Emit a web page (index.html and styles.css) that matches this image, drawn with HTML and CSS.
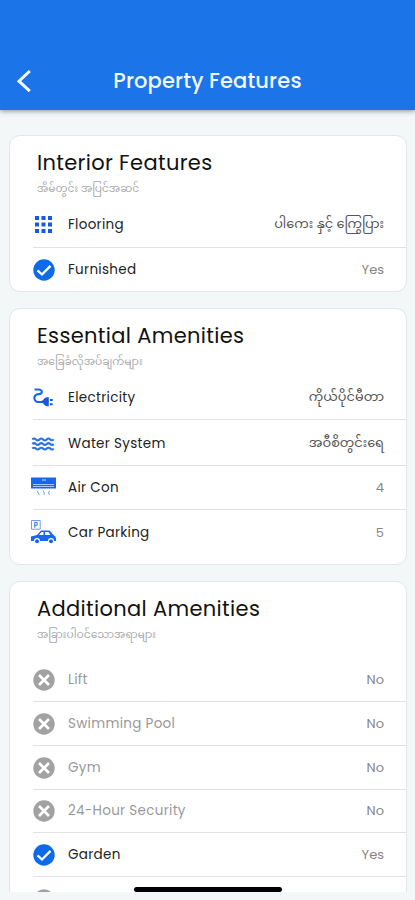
FILE: index.html
```html
<!DOCTYPE html>
<html lang="en">
<head>
<meta charset="utf-8">
<title>Property Features</title>
<link rel="stylesheet" href="styles.css">
</head>
<body>
<svg class="defs" aria-hidden="true">
  <symbol id="check" viewBox="0 0 22 22"><circle cx="11" cy="11" r="10.7" fill="#0d6ae8"/><path d="M4.5 11.3 9 15.5 17.5 6.9" fill="none" stroke="#fff" stroke-width="2.3"/></symbol>
  <symbol id="cross" viewBox="0 0 22 22"><circle cx="11" cy="11" r="10.7" fill="#a2a2a2"/><path d="M6 6l10 10M16 6L6 16" fill="none" stroke="#fff" stroke-width="2.7"/></symbol>
</svg>
<div class="screen">
  <header class="header">
    <svg class="back" viewBox="0 0 16 24"><path d="M13.8 2 3 12.200l10.800 10" fill="none" stroke="#f4f8ff" stroke-width="3"/></svg>
    <h1 class="title">Property Features</h1>
  </header>
  <main class="content">
    <section class="card interior">
      <h2 class="heading">Interior Features</h2>
      <p class="sub">အိမ်တွင်း အပြင်အဆင်</p>
      <ul class="list">
        <li class="row"><svg class="icon" viewBox="0 0 26 26"><path d="M5 4h4v4H5zM11.500 4h4v4h-4zM18 4h4v4h-4zM5 10.500h4v4H5zM11.500 10.500h4v4h-4zM18 10.500h4v4h-4zM5 17h4v4H5zM11.500 17h4v4h-4zM18 17h4v4h-4z" fill="#1858e8"/></svg><span class="label">Flooring</span><span class="value my">ပါကေး နှင့် ကြွေပြား</span></li>
        <li class="row"><svg class="icon round"><use href="#check"/></svg><span class="label">Furnished</span><span class="value">Yes</span></li>
      </ul>
    </section>
    <section class="card essential">
      <h2 class="heading">Essential Amenities</h2>
      <p class="sub">အခြေခံလိုအပ်ချက်များ</p>
      <ul class="list">
        <li class="row"><svg class="icon" viewBox="0 0 26 26"><path d="M4.500 4.500h4c4.500 0 4.500 4.600 0 4.600C3 9.100 3 17 8.500 17H12" fill="none" stroke="#1966e8" stroke-width="2.100"/><path d="M11.500 15.500h1.500c.8-2 2.500-3.200 4.500-3.200h1.300v9H17.500c-2 0-3.700-1.200-4.500-3.200h-1.500zM19.900 14h2.800v2.100h-2.800zM19.900 18.200h2.800v2.100h-2.800z" fill="#1557df"/></svg><span class="label">Electricity</span><span class="value my">ကိုယ်ပိုင်မီတာ</span></li>
        <li class="row"><svg class="icon" viewBox="0 0 26 26"><path d="M2.300 8.400q1.800-1.800 3.600 0t3.600 0 3.600 0 3.600 0 3.600 0 3.400 0M2.300 13q1.800-1.800 3.600 0t3.600 0 3.600 0 3.600 0 3.600 0 3.400 0M2.300 17.600q1.800-1.800 3.600 0t3.600 0 3.600 0 3.600 0 3.600 0 3.400 0" fill="none" stroke="#2872e6" stroke-width="2.100"/></svg><span class="label">Water System</span><span class="value my">အဝီစိတွင်းရေ</span></li>
        <li class="row"><svg class="icon" viewBox="0 0 26 26"><path d="M1 2.500h26v11H1z" fill="#1766ed"/><path d="M3 9.500h21M3 11.500h21" stroke="#a6c8ff"/><path d="M12 5h4" stroke="#d5e4ff"/><path d="M7.500 15.800q0 2 2 4M13 15.800q2 2 1 4M19.500 15.800q-2 2 0 4" fill="none" stroke="#6b9bea"/></svg><span class="label">Air Con</span><span class="value">4</span></li>
        <li class="row"><svg class="icon" viewBox="0 0 26 26"><path d="M1.500.5h8.700v8.700H1.500z" fill="none" stroke="#6d9df1"/><path d="M4.700 7.700V2.500h2.500v2.800H4.700" fill="none" stroke="#3478e8"/><path fill-rule="evenodd" d="M1 16.500 7 15l4-4.500h8.500l4 4.500q3 .8 2.500 6h-2a3 3 0 0 0-6 0H10a3 3 0 0 0-6 0H1zM9 15h4.500v-3H11.500zM15 15h5.500L18.500 12H15z" fill="#1768eb"/><circle cx="7" cy="21.200" r="2" fill="#1768eb"/><circle cx="21" cy="21.200" r="2" fill="#1768eb"/></svg><span class="label">Car Parking</span><span class="value">5</span></li>
      </ul>
    </section>
    <section class="card additional">
      <h2 class="heading">Additional Amenities</h2>
      <p class="sub">အခြားပါဝင်သောအရာများ</p>
      <ul class="list">
        <li class="row off"><svg class="icon round"><use href="#cross"/></svg><span class="label">Lift</span><span class="value">No</span></li>
        <li class="row off"><svg class="icon round"><use href="#cross"/></svg><span class="label">Swimming Pool</span><span class="value">No</span></li>
        <li class="row off"><svg class="icon round"><use href="#cross"/></svg><span class="label">Gym</span><span class="value">No</span></li>
        <li class="row off"><svg class="icon round"><use href="#cross"/></svg><span class="label">24-Hour Security</span><span class="value">No</span></li>
        <li class="row"><svg class="icon round"><use href="#check"/></svg><span class="label">Garden</span><span class="value">Yes</span></li>
        <li class="row off"><svg class="icon round"><use href="#cross"/></svg></li>
      </ul>
    </section>
  </main>
  <div class="home"></div>
</div>
</body>
</html>
```
FILE: styles.css
```css
* { box-sizing: border-box; }
body { margin: 0; background: #f3f7f8; font-family: Poppins, Inter, "Noto Sans Myanmar", "Noto Sans", sans-serif; color: #222; }
h1, h2, p, ul { margin: 0; padding: 0; font-weight: 400; }
.defs { position: absolute; width: 0; height: 0; }
.screen { position: relative; height: 900px; overflow: hidden; display: flex; flex-direction: column; }
.header { flex: none; height: 110px; padding: 51px 16px 0; background: #1b74e8; box-shadow: 0 1px 5px rgba(50, 70, 90, .6); display: grid; grid-template-columns: 16px 1fr 16px; align-items: center; z-index: 1; }
.back { width: 16px; height: 24px; }
.title { color: #f1f6ff; font-size: 21px; font-weight: 500; letter-spacing: .12px; text-align: center; line-height: 32px; }
.content { flex: none; height: 782px; padding: 25px 8px 0 9px; overflow: hidden; display: flex; flex-direction: column; gap: 16px; }
.card { flex: none; background: #fff; border: 1px solid #e2e7e8; border-radius: 11px; overflow: hidden; }
.interior { height: 157px; }
.essential { height: 257px; }
.additional { height: 360px; }
.heading { padding: 11px 0 0 27px; font-size: 21px; line-height: 32px; letter-spacing: .33px; color: #111; white-space: nowrap; }
.sub { padding-left: 27px; height: 20px; font-size: 10.65px; line-height: 20px; color: #aaa; white-space: nowrap; }
.list { list-style: none; margin-left: 23px; }
.row { height: 44px; display: flex; align-items: center; border-bottom: 1px solid #e1e3e3; padding: 1px 22px 0 0; }
.row:last-child { border-bottom: 0; }
.interior .row:first-child { height: 49px; padding-top: 4px; }
.interior .row:last-child { padding-top: 0; }
.essential .row:first-child { height: 48px; padding-top: 4px; }
.essential .row:nth-child(2) { height: 46px; padding-top: 2px; }
.essential .row:last-child { padding-top: 2px; }
.additional .row { height: 43.8px; }
.additional .row:first-child { height: 57px; padding-top: 14px; }
.icon { flex: none; width: 26px; height: 26px; margin: 0 12px 0 -3px; }
.icon.round { width: 22px; height: 22px; margin: 0 13px 0 0; }
.label { font-size: 13.5px; line-height: 20px; letter-spacing: .3px; }
.value { margin-left: auto; font-size: 13px; color: #858585; white-space: nowrap; }
.my { font-size: 12.9px; color: #555; }
.off .label { color: #999; }
.home { position: absolute; left: 134px; top: 887px; width: 148px; height: 5px; border-radius: 3px; background: #000; z-index: 2; }
```
